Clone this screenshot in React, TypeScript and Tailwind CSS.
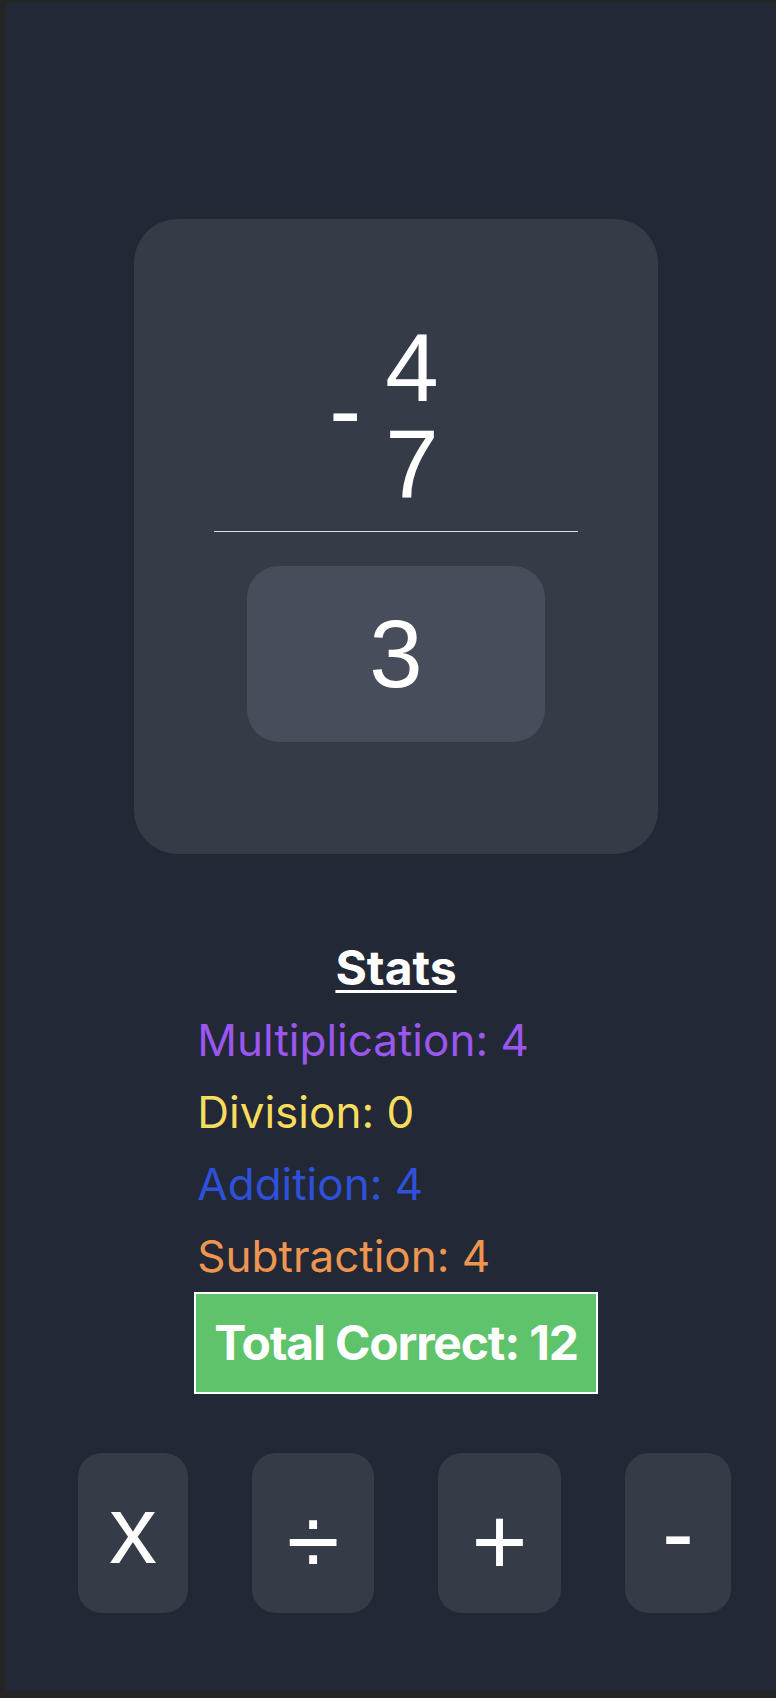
import React from 'react';

const numFont = { fontFamily: '"Liberation Sans", Arial, sans-serif' };

const stats = [
    { label: 'Multiplication', value: 4, color: 'text-[#9b56ef]' },
    { label: 'Division', value: 0, color: 'text-[#f8dc5e]' },
    { label: 'Addition', value: 4, color: 'text-[#2f50d9]' },
    { label: 'Subtraction', value: 4, color: 'text-[#ee9650]' },
];

export default function App() {
    return (
        <div className="min-h-screen bg-[#252525] pl-[6px] pt-[3px] pb-[7px]">
            <div className="h-[1688px] bg-[#222835] flex flex-col items-center pl-[10px] text-white">
                {/* Problem card */}
                <div
                    className="mt-[216px] w-[524px] h-[635px] rounded-[44px] bg-[#363b48] flex flex-col items-center pt-[101px]"
                    style={numFont}
                >
                    <div className="flex items-center pr-[24px]">
                        <span className="text-8xl leading-none mb-[12px]">-</span>
                        <div className="flex flex-col ml-[24px]">
                            <span className="text-8xl leading-none">4</span>
                            <span className="text-8xl leading-none">7</span>
                        </div>
                    </div>
                    <div className="mt-[19px] w-[364px] h-px bg-[#dcdcdc]" />
                    <div className="mt-[34px] w-[298px] h-[176px] rounded-[32px] bg-[#474d5a] flex items-center justify-center">
                        <span className="text-8xl leading-none">3</span>
                    </div>
                </div>

                {/* Stats */}
                <div className="mt-[78px] w-fit flex flex-col font-['Inter',sans-serif]">
                    <h2 className="text-center text-[48px] leading-[72px] font-bold underline underline-offset-[5px] decoration-[3px]">
                        Stats
                    </h2>
                    {stats.map((s) => (
                        <p key={s.label} className={`pl-[3px] text-[44px] leading-[72px] ${s.color}`}>
                            {s.label}: {s.value}
                        </p>
                    ))}
                    <div className="border-2 border-white bg-[#5ec36a] px-[18px] py-[13px]">
                        <p className="text-[48px] leading-[72px] font-bold tracking-tight">Total Correct: 12</p>
                    </div>
                </div>

                {/* Operation buttons */}
                <div className="mt-[59px] self-stretch flex gap-16 pl-[62px]" style={numFont}>
                    <button className="w-[110px] h-[160px] rounded-3xl bg-[#363b48] flex items-center justify-center text-8xl leading-none">
                        <span className="-mt-[6px]">x</span>
                    </button>
                    <button className="w-[122px] h-[160px] rounded-3xl bg-[#363b48] flex items-center justify-center text-8xl leading-none">
                        <span className="mt-[18px]">÷</span>
                    </button>
                    <button className="w-[123px] h-[160px] rounded-3xl bg-[#363b48] flex items-center justify-center text-8xl leading-none">
                        <span className="mt-[18px]">+</span>
                    </button>
                    <button className="w-[106px] h-[160px] rounded-3xl bg-[#363b48] flex items-center justify-center text-8xl leading-none">
                        <span>-</span>
                    </button>
                </div>
            </div>
        </div>
    );
}
